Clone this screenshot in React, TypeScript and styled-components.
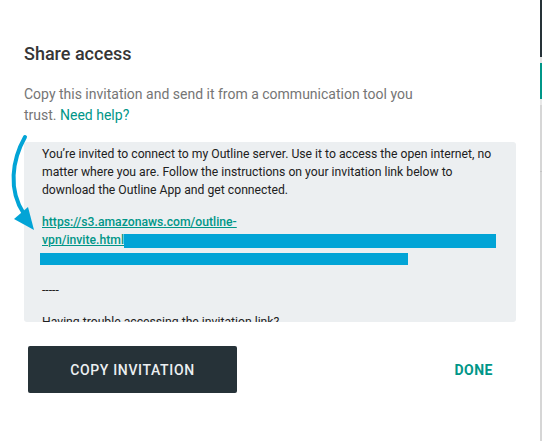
import React from "react";
import styled, { createGlobalStyle } from "styled-components";

const GlobalStyle = createGlobalStyle`
    html, body {
        margin: 0;
        padding: 0;
        background: #ffffff;
    }
    body {
        font-family: Roboto, "Liberation Sans", Arial, sans-serif;
        -webkit-font-smoothing: antialiased;
    }
`;

const Page = styled.div`
    position: relative;
    display: flex;
    height: 441px;
    overflow: hidden;
`;

const Dialog = styled.div`
    flex: 1;
    display: flex;
    flex-direction: column;
    padding: 42px 24px 0 24px;
`;

const Title = styled.h2`
    margin: 0;
    font-size: 18px;
    line-height: 24px;
    font-weight: 500;
    color: #363636;
`;

const Description = styled.p`
    margin: 18px 0 0;
    max-width: 400px;
    font-size: 14px;
    line-height: 21px;
    color: #757575;
`;

const HelpLink = styled.a`
    color: #009688;
    text-decoration: none;
    cursor: pointer;
`;

const Invitation = styled.div`
    margin-top: 16px;
    height: 180px;
    overflow: hidden;
    box-sizing: border-box;
    padding: 3px 18px 0;
    background: #eceff1;
    border-radius: 3px;
    font-size: 12.2px;
    line-height: 18px;
    color: #212121;
`;

const Para = styled.p`
    margin: 0 0 14px;
`;

const InviteLink = styled.a`
    display: block;
    margin: 0 0 14px;
    color: #009688;
    font-weight: 500;
    text-decoration: underline;
    word-break: break-all;
`;

const Redacted = styled.span<{ $width: number; $height: number; $shift?: number }>`
    display: inline-block;
    vertical-align: top;
    width: ${(p) => p.$width}px;
    height: ${(p) => p.$height}px;
    margin-top: ${(p) => (18 - p.$height) / 2 + 1}px;
    margin-left: ${(p) => p.$shift || 0}px;
    background: #02a4d6;
`;

const Actions = styled.div`
    display: flex;
    align-items: center;
    justify-content: space-between;
    margin: 24px 7px 0 4px;
`;

const PrimaryButton = styled.button`
    width: 209px;
    height: 47px;
    border: none;
    border-radius: 2px;
    background: #263238;
    color: #eceff1;
    font-family: inherit;
    font-size: 14px;
    font-weight: 500;
    letter-spacing: 0.65px;
    cursor: pointer;
`;

const TextButton = styled.button`
    padding: 0 16px;
    height: 47px;
    border: none;
    background: transparent;
    color: #009688;
    font-family: inherit;
    font-size: 14px;
    font-weight: 700;
    letter-spacing: 0.5px;
    cursor: pointer;
`;

const Strip = styled.div`
    width: 2px;
    display: flex;
    flex-direction: column;
    background: #d6d6d6;
`;

const Segment = styled.div<{ $color: string; $height: number }>`
    height: ${(p) => p.$height}px;
    background: ${(p) => p.$color};
`;

const Arrow = styled.svg`
    position: absolute;
    left: 0;
    top: 0;
    pointer-events: none;
`;

const App = () => {
    return (
        <Page>
            <GlobalStyle />
            <Dialog>
                <Title>Share access</Title>
                <Description>
                    Copy this invitation and send it from a communication tool you trust.{" "}
                    <HelpLink>Need help?</HelpLink>
                </Description>
                <Invitation>
                    <Para>
                        You’re invited to connect to my Outline server. Use it to access the open internet,
                        no matter where you are. Follow the instructions on your invitation link below to
                        download the Outline App and get connected.
                    </Para>
                    <InviteLink>
                        https://s3.amazonaws.com/outline-
                        <br />
                        vpn/invite.html
                        <Redacted $width={372} $height={14} />
                        <br />
                        <Redacted $width={368} $height={12} $shift={-2} />
                    </InviteLink>
                    <Para>-----</Para>
                    <Para>Having trouble accessing the invitation link?</Para>
                    <Para>
                        1. Download and install the Outline App for your device.
                        <br />
                        2. Copy your access key and open the Outline App.
                    </Para>
                </Invitation>
                <Actions>
                    <PrimaryButton>COPY INVITATION</PrimaryButton>
                    <TextButton>DONE</TextButton>
                </Actions>
            </Dialog>
            <Strip>
                <Segment $color="#263238" $height={57} />
                <Segment $color="#e4e4e4" $height={6} />
                <Segment $color="#009688" $height={36} />
                <Segment $color="#e8e8e8" $height={6} />
                <Segment $color="#d6d6d6" $height={66} />
                <Segment $color="#c4c4c4" $height={1} />
            </Strip>
            <Arrow width="50" height="240" viewBox="0 0 50 240">
                <path
                    d="M25 137 C 12 160, 8 190, 24 214"
                    fill="none"
                    stroke="#02a4d6"
                    strokeWidth="4"
                    strokeLinecap="round"
                />
                <polygon points="14,219 34,230 28,207" fill="#02a4d6" />
            </Arrow>
        </Page>
    );
};

export default App;
